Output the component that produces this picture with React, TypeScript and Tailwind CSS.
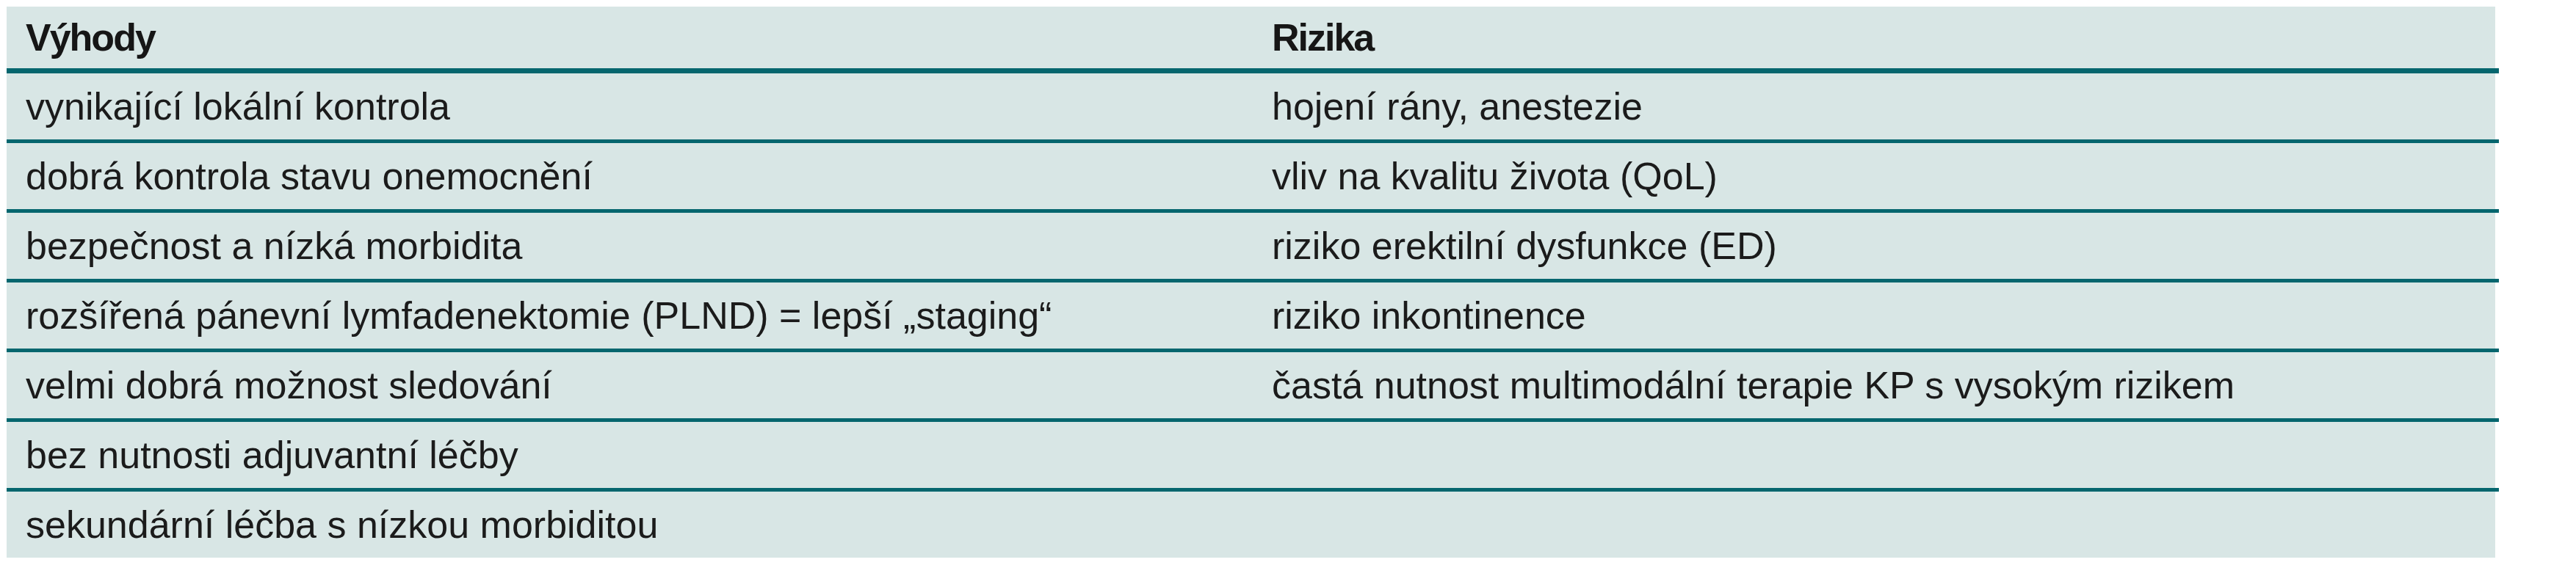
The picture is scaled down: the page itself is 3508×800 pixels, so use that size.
const rows: [string, string][] = [
  ["vynikající lokální kontrola", "hojení rány, anestezie"],
  ["dobrá kontrola stavu onemocnění", "vliv na kvalitu života (QoL)"],
  ["bezpečnost a nízká morbidita", "riziko erektilní dysfunkce (ED)"],
  ["rozšířená pánevní lymfadenektomie (PLND) = lepší „staging“", "riziko inkontinence"],
  ["velmi dobrá možnost sledování", "častá nutnost multimodální terapie KP s vysokým rizikem"],
  ["bez nutnosti adjuvantní léčby", ""],
  ["sekundární léčba s nízkou morbiditou", ""],
];

const Row = ({ left, right, last }: { left: string; right: string; last: boolean }) => (
  <>
    <div className="mr-[5px] grid h-[90px] grid-cols-[1697px_1fr] items-center bg-[#d8e6e5] text-[#1b1b1b]">
      <div className="pl-[26px]">{left}</div>
      <div className="pl-[26px]">{right}</div>
    </div>
    {!last && <div className="h-[5px] bg-[#05666e]" />}
  </>
);

const App = () => {
  return (
    <div className="min-h-[800px] bg-white pl-[9px] pt-[9px]">
      <div className="w-[3394px] font-['Liberation_Sans',Arial,sans-serif] text-[52px] leading-none">
        <div className="mr-[5px] grid h-[84px] grid-cols-[1697px_1fr] items-center bg-[#d8e6e5] font-bold tracking-[-2px] text-[#161616]">
          <div className="pl-[26px]">Výhody</div>
          <div className="pl-[26px]">Rizika</div>
        </div>
        <div className="h-[7px] bg-[#05666e]" />
        {rows.map(([l, r], i) => (
          <Row key={i} left={l} right={r} last={i === rows.length - 1} />
        ))}
      </div>
    </div>
  );
};

export default App;
